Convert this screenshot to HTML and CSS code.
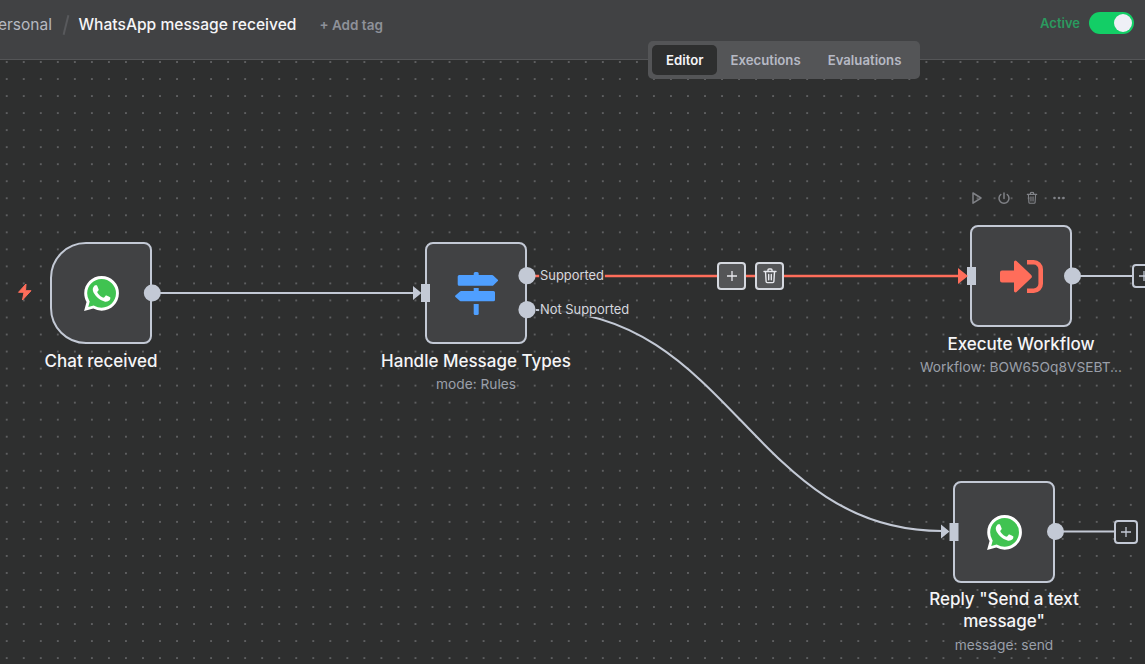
FILE: index.html
```html
<!DOCTYPE html>
<html lang="en">
<head>
<meta charset="utf-8">
<title>WhatsApp message received</title>
<link rel="stylesheet" href="styles.css">
</head>
<body>
<svg class="defs" width="0" height="0" aria-hidden="true">
  <symbol id="wa" viewBox="0 0 24 24">
    <path fill="#fff" d="M20.464 3.488A11.815 11.815 0 0012.05 0C5.495 0 .16 5.335.157 11.892c0 2.096.547 4.142 1.588 5.945L.057 24l6.305-1.654a11.882 11.882 0 005.683 1.448h.005c6.554 0 11.89-5.335 11.893-11.893a11.821 11.821 0 00-3.48-8.413z"/>
    <path fill="#40c351" d="M12.051 21.785h-.004a9.87 9.87 0 01-5.031-1.378l-.361-.214-3.741.982.998-3.648-.235-.374a9.86 9.86 0 01-1.51-5.26c.001-5.45 4.436-9.884 9.888-9.884 2.64 0 5.122 1.03 6.988 2.898a9.825 9.825 0 012.893 6.994c-.003 5.45-4.437 9.884-9.885 9.884z"/>
    <path fill="#fff" d="M17.472 14.382c-.297-.149-1.758-.867-2.03-.967-.273-.099-.471-.148-.67.15-.197.297-.767.966-.94 1.164-.173.199-.347.223-.644.075-.297-.15-1.255-.463-2.39-1.475-.883-.788-1.48-1.761-1.653-2.059-.173-.297-.018-.458.13-.606.134-.133.298-.347.446-.52.149-.174.198-.298.298-.497.099-.198.05-.371-.025-.52-.075-.149-.669-1.612-.916-2.207-.242-.579-.487-.5-.669-.51-.173-.008-.371-.01-.57-.01-.198 0-.52.074-.792.372-.272.297-1.04 1.016-1.04 2.479 0 1.462 1.065 2.875 1.213 3.074.149.198 2.096 3.2 5.077 4.487.709.306 1.262.489 1.694.625.712.227 1.36.195 1.871.118.571-.085 1.758-.719 2.006-1.413.248-.694.248-1.289.173-1.413-.074-.124-.272-.198-.57-.347z"/>
  </symbol>
  <symbol id="trash" viewBox="0 0 14 16">
    <path fill="none" stroke="currentColor" stroke-width="1.4" stroke-linecap="round" stroke-linejoin="round" d="M1 3.5h12M5 3.5V2a1 1 0 0 1 1-1h2a1 1 0 0 1 1 1v1.500M2.500 3.500l.6 10a1.200 1.200 0 0 0 1.200 1.100h5.400a1.200 1.200 0 0 0 1.200-1.100l.6-10M5.700 6.500v5.200M8.300 6.500v5.200"/>
  </symbol>
</svg>

<header class="topbar">
  <div class="crumbs">
    <span class="crumb-parent">ersonal</span>
    <span class="crumb-sep"></span>
    <span class="crumb-title">WhatsApp message received</span>
    <span class="add-tag">+ Add tag</span>
  </div>
  <div class="active-wrap">
    <span class="active-label">Active</span>
    <span class="toggle"><span class="toggle-knob"></span></span>
  </div>
</header>

<nav class="tabs">
  <span class="tab tab-on">Editor</span>
  <span class="tab">Executions</span>
  <span class="tab">Evaluations</span>
</nav>

<main class="canvas">
  <section class="node node-chat">
    <div class="box box-trigger">
      <svg class="wa-icon"><use href="#wa"/></svg>
    </div>
    <div class="node-name">Chat received</div>
  </section>

  <section class="node node-switch">
    <div class="box">
      <svg class="sign-icon" viewBox="0 0 43 43">
        <path fill="#4f9fff" d="M18.700 1.500A1.500 1.500 0 0 1 20.200 0h2a1.500 1.500 0 0 1 1.500 1.500V3h13.500a1.500 1.500 0 0 1 1 .4l4.600 4.300a1 1 0 0 1 0 1.400l-4.600 4.300a1.500 1.500 0 0 1-1 .4H4.200a1.500 1.500 0 0 1-1.500-1.500V4.500A1.500 1.500 0 0 1 4.200 3h14.500z"/>
        <path fill="#4f9fff" d="M18.700 16h5v3h14.800a1.500 1.500 0 0 1 1.500 1.500v7.300a1.500 1.500 0 0 1-1.500 1.500H6a1.500 1.500 0 0 1-1-.4L.4 25a1 1 0 0 1 0-1.400L5 19.400a1.500 1.500 0 0 1 1-.4h12.700z"/>
        <path fill="#4f9fff" d="M18.700 32h5v9.500a1.500 1.500 0 0 1-1.500 1.500h-2a1.500 1.500 0 0 1-1.500-1.500z"/>
      </svg>
    </div>
    <div class="node-name">Handle Message Types</div>
    <div class="node-sub">mode: Rules</div>
  </section>

  <section class="node node-exec">
    <div class="toolbar">
      <svg class="tool" viewBox="0 0 14 16"><path fill="none" stroke="currentColor" stroke-width="1.500" stroke-linejoin="round" d="M3 3v10.200L11 8z"/></svg>
      <svg class="tool" viewBox="0 0 14 16"><path fill="none" stroke="currentColor" stroke-width="1.500" stroke-linecap="round" d="M7 3v5.500M3.800 4.500a5 5 0 1 0 6.400 0"/></svg>
      <svg class="tool" viewBox="-1.750 -2 17.500 20"><use href="#trash" width="14" height="16"/></svg>
      <svg class="tool" viewBox="0 0 14 16"><g fill="currentColor"><circle cx="2.500" cy="8" r="1.300"/><circle cx="7" cy="8" r="1.300"/><circle cx="11.500" cy="8" r="1.300"/></g></svg>
    </div>
    <div class="box">
      <svg class="exec-icon" viewBox="0 0 43 33">
        <path fill="#ff6d5a" d="M0 12.500a2 2 0 0 1 2-2h12V2a1.500 1.500 0 0 1 2.500-1.100L31 14.700a2.500 2.500 0 0 1 0 3.600L16.500 32.100A1.500 1.500 0 0 1 14 31v-8.500H2a2 2 0 0 1-2-2z"/>
        <path fill="none" stroke="#ff6d5a" stroke-width="4.600" d="M27 2.300h6.700a7 7 0 0 1 7 7v14.400a7 7 0 0 1-7 7H27"/>
      </svg>
    </div>
    <div class="node-name">Execute Workflow</div>
    <div class="node-sub node-sub-clip">Workflow: BOW65Oq8VSEBT...</div>
  </section>

  <section class="node node-reply">
    <div class="box">
      <svg class="wa-icon"><use href="#wa"/></svg>
    </div>
    <div class="node-name">Reply "Send a text message"</div>
    <div class="node-sub">message: send</div>
  </section>

  <svg class="wires" width="1145" height="664" viewBox="0 0 1145 664">
    <g class="wire">
      <path d="M152 293H414"/>
      <path d="M536 310C732 310 751 531 942 531"/>
      <path d="M1072 276H1132"/>
      <path d="M1055 531.500H1114"/>
    </g>
    <g class="wire-hot">
      <path d="M527 276H958"/>
    </g>
    <g class="port">
      <circle cx="152.300" cy="293" r="8.500"/>
      <path d="M413 286l8.500 7-8.500 7z"/>
      <rect x="421" y="284" width="9" height="18"/>
      <circle cx="527" cy="275.700" r="8.600"/>
      <circle cx="527" cy="309.700" r="8.600"/>
      <rect x="967" y="267" width="9" height="18"/>
      <circle cx="1072.500" cy="276" r="8.500"/>
      <path d="M941 524.500l8.500 7-8.500 7z"/>
      <rect x="949.500" y="523" width="9" height="18"/>
      <circle cx="1055.500" cy="531.500" r="8.500"/>
    </g>
    <path class="arrow-hot" d="M958 268l10 8-10 8z"/>
    <path class="bolt" d="M26 284L18.500 292.300H24L22.500 300L31 290.700H25.500z"/>
  </svg>

  <span class="branch branch-a">Supported</span>
  <span class="branch branch-b">Not Supported</span>

  <button class="edge-btn btn-add" type="button" aria-label="Add">
    <svg viewBox="0 0 12 12"><path d="M6 1v10M1 6h10"/></svg>
  </button>
  <button class="edge-btn btn-del" type="button" aria-label="Delete">
    <svg class="del-icon"><use href="#trash"/></svg>
  </button>

  <button class="plus plus-exec" type="button" aria-label="Add"><svg viewBox="0 0 10 10"><path d="M5 0v10M0 5h10"/></svg></button>
  <button class="plus plus-reply" type="button" aria-label="Add"><svg viewBox="0 0 10 10"><path d="M5 0v10M0 5h10"/></svg></button>
</main>
</body>
</html>
```
FILE: styles.css
```css
* { box-sizing: border-box; }
html, body { height: 100%; }
body {
  margin: 0;
  width: 1145px;
  height: 664px;
  overflow: hidden;
  display: flex;
  flex-direction: column;
  position: relative;
  background: #2e2f2f;
  font-family: Inter, "Liberation Sans", sans-serif;
  color: #f5f5f7;
}
.defs { position: absolute; }

.topbar {
  flex: 0 0 60px;
  display: flex;
  justify-content: space-between;
  align-items: flex-start;
  padding: 12px 11px 0 0;
  background: #414244;
  border-bottom: 1px solid #545557;
}
.crumbs { display: flex; align-items: center; height: 25px; margin-left: -2px; }
.crumb-parent { font-size: 15.5px; color: #b6b9c0; }
.crumb-sep {
  width: 1.5px;
  height: 20px;
  margin: 0 12px 0 13px;
  background: #58595c;
  transform: rotate(14deg);
}
.crumb-title { font-size: 15.6px; font-weight: 500; color: #f5f5f7; }
.add-tag { margin-left: 23px; font-size: 13.5px; font-weight: 600; color: #8e9199; }
.active-wrap { display: flex; align-items: center; gap: 9px; }
.active-label { font-size: 13px; font-weight: 600; color: #2b9a5f; }
.toggle {
  display: flex;
  justify-content: flex-end;
  align-items: center;
  width: 45px;
  height: 22px;
  padding-right: 2px;
  border-radius: 11px;
  background: #13ce66;
}
.toggle-knob { width: 18px; height: 18px; border-radius: 50%; background: #eff0f6; }

.tabs {
  position: absolute;
  left: 648px;
  top: 41px;
  z-index: 3;
  display: flex;
  height: 38px;
  width: 272px;
  padding: 4px;
  background: #545557;
  border-radius: 5px;
}
.tab {
  display: flex;
  align-items: center;
  padding: 0 14px 0 13px;
  font-size: 13.2px;
  font-weight: 600;
  color: #b6b9c4;
}
.tab-on { padding: 0 14px; background: #2e2f2f; color: #f5f5f7; border-radius: 5px; }

.canvas {
  flex: 1;
  position: relative;
  background-color: #2e2f2f;
  background-image: radial-gradient(circle at center, #77787a 0, #77787a .5px, transparent 1px);
  background-size: 17.045px 17.045px;
  background-position: -1.8px -6.5px;
}
.node {
  position: absolute;
  width: 220px;
  display: flex;
  flex-direction: column;
  align-items: center;
  text-align: center;
}
.node-chat { left: -9px; top: 182px; }
.node-switch { left: 366px; top: 182px; }
.node-exec { left: 911px; top: 165px; }
.node-reply { left: 894px; top: 421px; }

.box {
  width: 102px;
  height: 102px;
  display: flex;
  align-items: center;
  justify-content: center;
  background: #414244;
  border: 2px solid #c3c9d5;
  border-radius: 8px;
}
.box-trigger { border-radius: 36px 8px 8px 36px; }
.wa-icon { width: 35px; height: 35px; }
.sign-icon { width: 43px; height: 43px; }
.exec-icon { width: 43px; height: 33px; }
.node-name {
  width: 190px;
  margin-top: 6px;
  font-size: 17px;
  font-weight: 500;
  line-height: 22px;
  color: #f5f5f7;
}
.node-switch .node-name { width: 200px; }
.node-reply .node-name { margin-top: 5px; }
.node-sub {
  margin-top: 3px;
  font-size: 13.75px;
  line-height: 18px;
  color: #9a9fa9;
}
.node-reply .node-sub { margin-top: 4px; }
.node-sub-clip { white-space: nowrap; }

.toolbar {
  position: absolute;
  top: -35px;
  left: 59px;
  display: flex;
  gap: 13.4px;
  color: #808287;
}
.tool { width: 14px; height: 16px; }

.wires { position: absolute; left: 0; top: -60px; pointer-events: none; }
.wire path { fill: none; stroke: #c3c9d5; stroke-width: 2.1; }
.wire-hot path { fill: none; stroke: #ff6d5a; stroke-width: 2.5; }
.port { fill: #c3c9d5; }
.arrow-hot { fill: #ff6d5a; }
.bolt { fill: #ff6d5a; stroke: #ff6d5a; stroke-width: 1; stroke-linejoin: round; }

.branch {
  position: absolute;
  left: 539px;
  padding: 0 1px;
  font-size: 12.9px;
  line-height: 14px;
  color: #d5d8df;
  background: rgba(46, 47, 47, .85);
}
.branch-a { top: 209px; }
.branch-b { top: 243px; }

.edge-btn {
  position: absolute;
  top: 202px;
  width: 29px;
  height: 28px;
  padding: 0;
  display: flex;
  align-items: center;
  justify-content: center;
  background: #545557;
  border: 2px solid #d5d8df;
  border-radius: 4px;
  color: #e8e9ee;
}
.btn-add { left: 717px; }
.btn-del { left: 755px; }
.edge-btn svg { width: 12px; height: 12px; }
.edge-btn path { fill: none; stroke: currentColor; stroke-width: 1.300; }
.edge-btn .del-icon { width: 14px; height: 16px; }

.plus {
  position: absolute;
  width: 24px;
  height: 24px;
  padding: 0;
  display: flex;
  align-items: center;
  justify-content: center;
  background: #2e2f2f;
  border: 2px solid #c3c9d5;
  border-radius: 4px;
}
.plus-exec { left: 1132px; top: 204px; }
.plus-reply { left: 1114px; top: 460px; }
.plus svg { width: 10px; height: 10px; }
.plus path { fill: none; stroke: #c3c9d5; stroke-width: 1.300; }
```
